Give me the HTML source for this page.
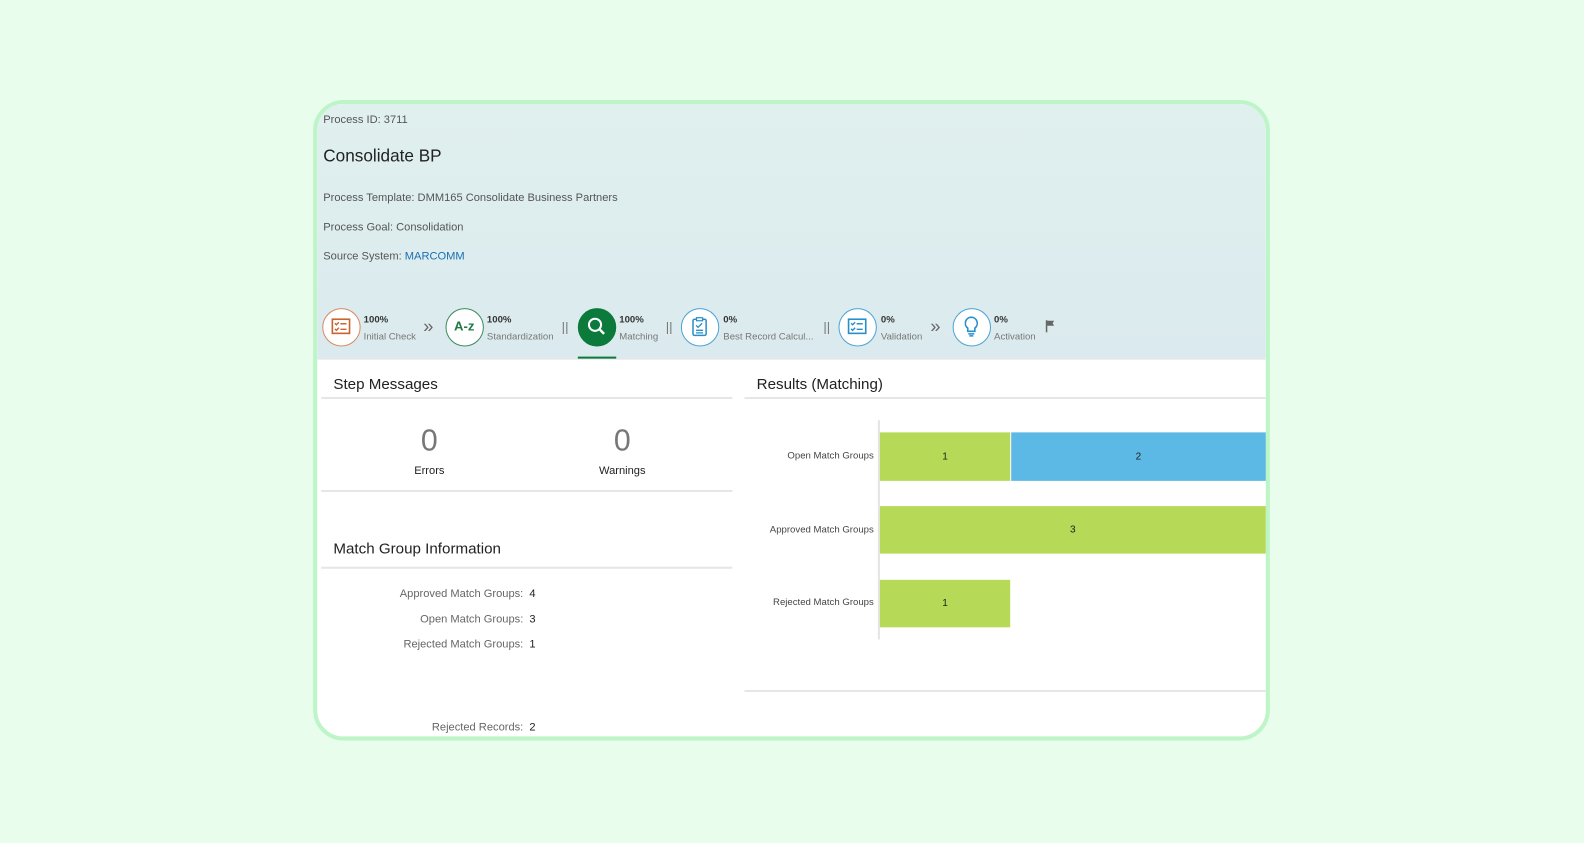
<!DOCTYPE html>
<html><head><meta charset="utf-8"><style>
*{margin:0;padding:0;box-sizing:border-box}
body{width:1584px;height:842px;background:#e8fdec;font-family:"Liberation Sans",Arial,sans-serif;position:relative;overflow:hidden}
#w{position:absolute;left:0;top:0;width:1568px;height:834px;transform:scale(1.0102);transform-origin:0 0}
.a{position:absolute;white-space:nowrap}
.card{position:absolute;left:310px;top:99px;width:947px;height:634px;border:4px solid #bdf5c8;border-radius:30px;background:#fff;overflow:hidden}
.hdr{position:absolute;left:0;top:0;width:100%;height:253px;background:linear-gradient(#e0f0ee,#dbeaee);border-bottom:2px solid #e2e6ea}
.g{color:#555;font-size:11px}
.ic{position:absolute;width:38px;height:38px;border-radius:50%;border:1.5px solid #4aa3d6;background:#fff;top:305px}
.pct{font-size:9.5px;font-weight:bold;color:#333}
.lbl{font-size:9.5px;color:#777}
.sep{font-size:18px;color:#666}
.sep2{font-size:13px;color:#777}
.line{position:absolute;height:2px;background:#e6e6e6}
.bar{position:absolute;display:flex;align-items:center;justify-content:center;font-size:10px;color:#222}
.rl{font-size:11px;color:#666;text-align:right;width:200px}
</style></head><body><div id="w">
<div class="card"><div class="hdr"></div></div>

<div class="a g" style="left:320px;top:113px">Process ID: 3711</div>
<div class="a" style="left:320px;top:145px;font-size:17px;color:#222">Consolidate BP</div>
<div class="a g" style="left:320px;top:190px">Process Template: DMM165 Consolidate Business Partners</div>
<div class="a g" style="left:320px;top:219px">Process Goal: Consolidation</div>
<div class="a g" style="left:320px;top:248px">Source System: <span style="color:#1a6fb0">MARCOMM</span></div>

<div class="ic" style="left:319px;border-color:#d98a60"><svg width="35" height="35" viewBox="0 0 35 35"><rect x="9" y="10" width="17" height="14" fill="none" stroke="#c8642e" stroke-width="1.6"/><path d="M11.5 14l1.5 1.5 2.5-2.5M11.5 19.5l1.5 1.5 2.5-2.5M17 14.5h6M17 20h6" stroke="#c8642e" stroke-width="1.4" fill="none"/></svg></div>
<div class="a pct" style="left:360px;top:311px">100%</div><div class="a lbl" style="left:360px;top:328px">Initial Check</div>
<div class="a sep" style="left:419px;top:313px">&#187;</div>

<div class="ic" style="left:441px;border-color:#3d8a5c"><div class="a" style="left:0;width:35px;top:9px;text-align:center;font-size:13px;font-weight:bold;color:#1f7a44">A-z</div></div>
<div class="a pct" style="left:482px;top:311px">100%</div><div class="a lbl" style="left:482px;top:328px">Standardization</div>
<div class="a sep2" style="left:556px;top:316px">||</div>

<div class="ic" style="left:572px;background:#0b7a3b;border-color:#0b7a3b"><svg width="35" height="35" viewBox="0 0 35 35"><circle cx="16" cy="15.5" r="6" fill="none" stroke="#fff" stroke-width="2"/><path d="M20.5 20l4.5 4.5" stroke="#fff" stroke-width="2.4"/></svg></div>
<div class="a" style="left:572px;top:353px;width:38px;height:2px;background:#0b7a3b"></div>
<div class="a pct" style="left:613px;top:311px">100%</div><div class="a lbl" style="left:613px;top:328px">Matching</div>
<div class="a sep2" style="left:659px;top:316px">||</div>

<div class="ic" style="left:674px"><svg width="35" height="35" viewBox="0 0 35 35"><rect x="11" y="10" width="13" height="16" rx="1.5" fill="none" stroke="#2a8fc9" stroke-width="1.5"/><rect x="14.5" y="8.5" width="6" height="3" fill="#fff" stroke="#2a8fc9" stroke-width="1.2"/><path d="M14 16l2 2 4-4M14 21h7M14 23.5h7" stroke="#2a8fc9" stroke-width="1.3" fill="none"/></svg></div>
<div class="a pct" style="left:716px;top:311px">0%</div><div class="a lbl" style="left:716px;top:328px">Best Record Calcul...</div>
<div class="a sep2" style="left:815px;top:316px">||</div>

<div class="ic" style="left:830px"><svg width="35" height="35" viewBox="0 0 35 35"><rect x="9" y="10" width="17" height="14" fill="none" stroke="#2a8fc9" stroke-width="1.6"/><path d="M11.5 14l1.5 1.5 2.5-2.5M11.5 19.5l1.5 1.5 2.5-2.5M17 14.5h6M17 20h6" stroke="#2a8fc9" stroke-width="1.4" fill="none"/></svg></div>
<div class="a pct" style="left:872px;top:311px">0%</div><div class="a lbl" style="left:872px;top:328px">Validation</div>
<div class="a sep" style="left:921px;top:313px">&#187;</div>

<div class="ic" style="left:943px"><svg width="35" height="35" viewBox="0 0 35 35"><path d="M17.5 8a6 6 0 0 0-3.5 10.8V22h7v-3.2A6 6 0 0 0 17.5 8z" fill="none" stroke="#2a8fc9" stroke-width="1.6"/><path d="M14.5 24.5h6M15.5 26.5h4" stroke="#2a8fc9" stroke-width="1.4"/></svg></div>
<div class="a pct" style="left:984px;top:311px">0%</div><div class="a lbl" style="left:984px;top:328px">Activation</div>
<svg class="a" style="left:1034px;top:316px" width="12" height="13" viewBox="0 0 12 13"><path d="M2 1v12" stroke="#666" stroke-width="1.5"/><path d="M2.5 1.5h7l-1.5 2.5 1.5 2.5h-7z" fill="#666"/></svg>

<div class="a" style="left:330px;top:372px;font-size:15px;color:#222">Step Messages</div>
<div class="line" style="left:318px;top:393px;width:407px"></div>
<div class="a" style="left:395px;top:420px;width:60px;text-align:center;font-size:30px;color:#777">0</div>
<div class="a" style="left:395px;top:460px;width:60px;text-align:center;font-size:11px;color:#222">Errors</div>
<div class="a" style="left:576px;top:420px;width:80px;text-align:center;font-size:30px;color:#777">0</div>
<div class="a" style="left:576px;top:460px;width:80px;text-align:center;font-size:11px;color:#222">Warnings</div>
<div class="line" style="left:318px;top:485px;width:407px"></div>

<div class="a" style="left:330px;top:535px;font-size:15px;color:#222">Match Group Information</div>
<div class="line" style="left:318px;top:561px;width:407px"></div>
<div class="a rl" style="left:318px;top:582px">Approved Match Groups:</div><div class="a" style="left:524px;top:582px;font-size:11px;color:#222">4</div>
<div class="a rl" style="left:318px;top:607px">Open Match Groups:</div><div class="a" style="left:524px;top:607px;font-size:11px;color:#222">3</div>
<div class="a rl" style="left:318px;top:632px">Rejected Match Groups:</div><div class="a" style="left:524px;top:632px;font-size:11px;color:#222">1</div>
<div class="a rl" style="left:318px;top:714px">Rejected Records:</div><div class="a" style="left:524px;top:714px;font-size:11px;color:#222">2</div>

<div class="a" style="left:749px;top:372px;font-size:15px;color:#222">Results (Matching)</div>
<div class="line" style="left:737px;top:393px;width:516px"></div>
<div class="a" style="left:869px;top:416px;width:2px;height:217px;background:#e4e4e4"></div>
<div class="a" style="left:700px;top:446px;width:165px;text-align:right;font-size:9.5px;color:#444">Open Match Groups</div>
<div class="a" style="left:700px;top:519px;width:165px;text-align:right;font-size:9.5px;color:#444">Approved Match Groups</div>
<div class="a" style="left:700px;top:591px;width:165px;text-align:right;font-size:9.5px;color:#444">Rejected Match Groups</div>
<div class="bar" style="left:871px;top:428px;width:129px;height:48px;background:#b6d957">1</div>
<div class="bar" style="left:1001px;top:428px;width:252px;height:48px;background:#5cb8e4">2</div>
<div class="bar" style="left:871px;top:501px;width:382px;height:47px;background:#b6d957">3</div>
<div class="bar" style="left:871px;top:574px;width:129px;height:47px;background:#b6d957">1</div>
<div class="line" style="left:737px;top:683px;width:516px"></div>
</div></body></html>
